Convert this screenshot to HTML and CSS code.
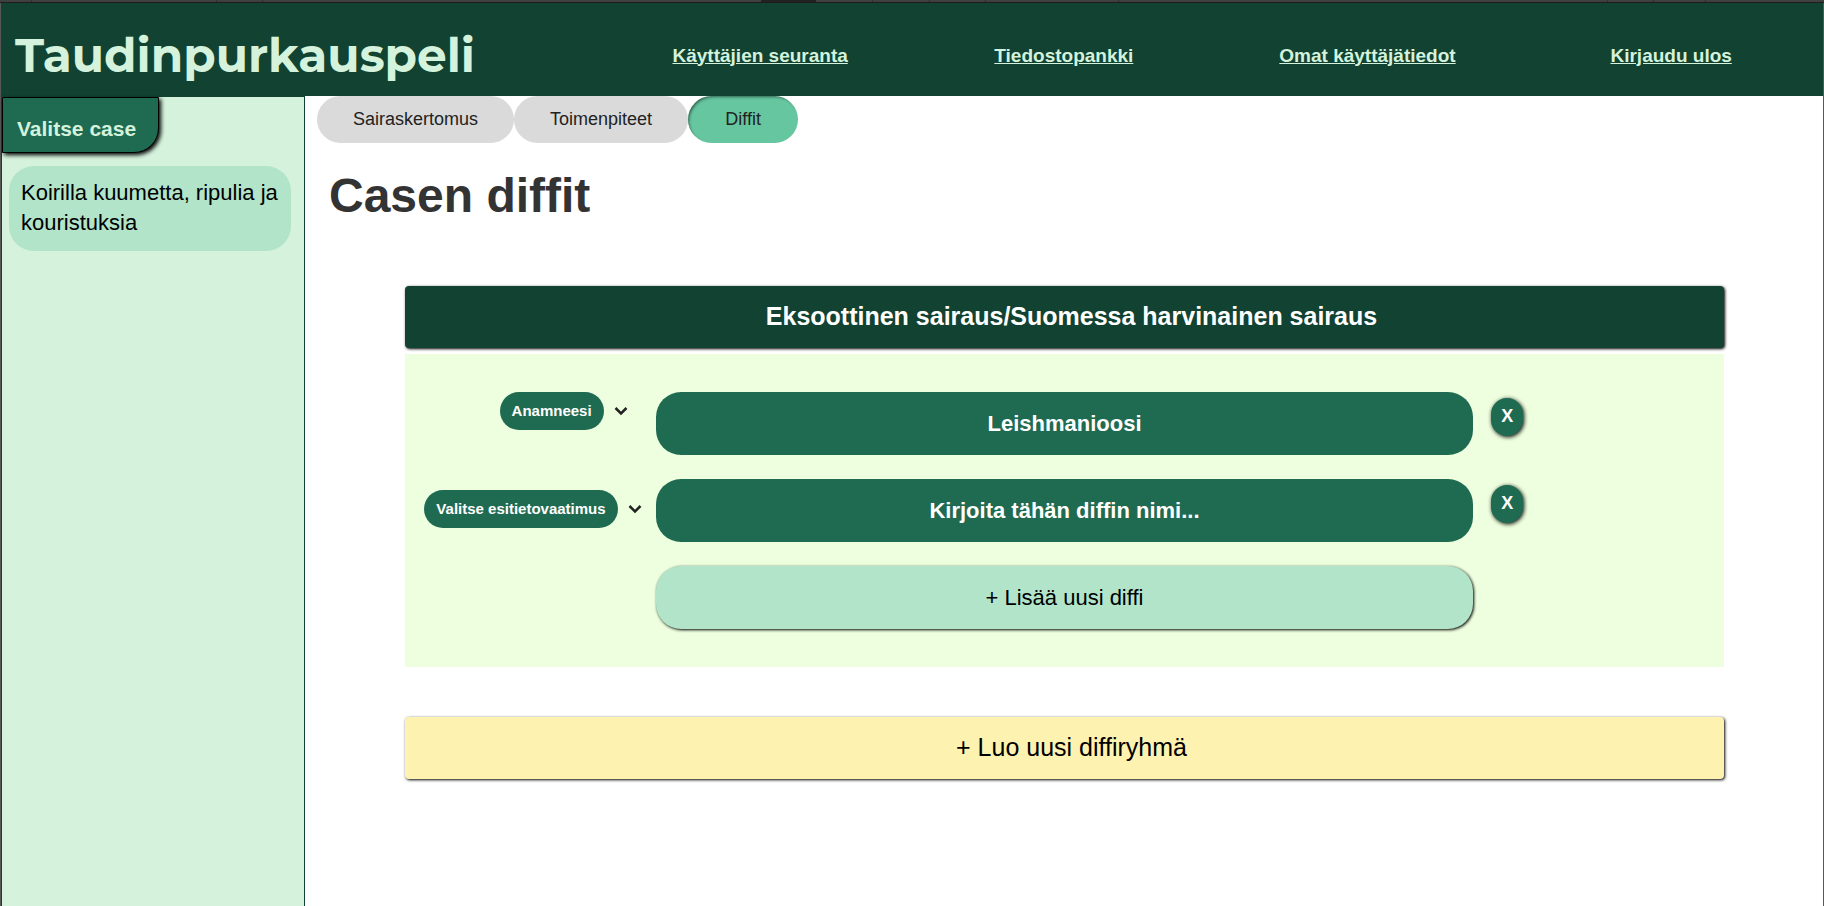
FILE: index.html
```html
<!DOCTYPE html>
<html lang="fi">
<head>
<meta charset="utf-8">
<title>Taudinpurkauspeli</title>
<link rel="stylesheet" href="styles.css">
</head>
<body>
<div class="strip"></div>
<div class="app">
  <header class="header">
    <div class="logo">Taudinpurkauspeli</div>
    <nav class="nav">
      <a href="#seuranta">Käyttäjien seuranta</a>
      <a href="#tiedostot">Tiedostopankki</a>
      <a href="#tiedot">Omat käyttäjätiedot</a>
      <a href="#ulos">Kirjaudu ulos</a>
    </nav>
  </header>
  <div class="body">
    <aside class="sidebar">
      <h2 class="sidebar-title">Valitse case</h2>
      <button class="case" type="button">Koirilla kuumetta, ripulia ja kouristuksia</button>
    </aside>
    <main class="main">
      <div class="tabs">
        <button class="tab" type="button">Sairaskertomus</button>
        <button class="tab" type="button">Toimenpiteet</button>
        <button class="tab tab-active" type="button">Diffit</button>
      </div>
      <h1 class="title">Casen diffit</h1>
      <section class="group">
        <h2 class="bar bar-dark">Eksoottinen sairaus/Suomessa harvinainen sairaus</h2>
        <div class="panel">
          <div class="row">
            <div class="premise premise-set">
              <span class="tag">Anamneesi</span>
              <button class="toggle" type="button" aria-label="Avaa valikko"><svg class="chevron" viewBox="0 0 14 10"><path d="M1.500 2 7 7.500 12.500 2"/></svg></button>
            </div>
            <input class="pill" type="text" aria-label="Diffin nimi" value="Leishmanioosi">
            <button class="remove" type="button">X</button>
          </div>
          <div class="row">
            <div class="premise premise-empty">
              <span class="tag">Valitse esitietovaatimus</span>
              <button class="toggle" type="button" aria-label="Avaa valikko"><svg class="chevron" viewBox="0 0 14 10"><path d="M1.500 2 7 7.500 12.500 2"/></svg></button>
            </div>
            <input class="pill" type="text" aria-label="Diffin nimi" placeholder="Kirjoita tähän diffin nimi...">
            <button class="remove" type="button">X</button>
          </div>
          <div class="row">
            <button class="pill pill-add" type="button">+ Lisää uusi diffi</button>
          </div>
        </div>
      </section>
      <button class="bar bar-new" type="button">+ Luo uusi diffiryhmä</button>
    </main>
  </div>
</div>
</body>
</html>
```
FILE: styles.css
```css
* { box-sizing: border-box; }

body {
  margin: 0;
  min-height: 100vh;
  display: flex;
  flex-direction: column;
  font-family: "Liberation Sans", Arial, sans-serif;
  color: #000;
  background: #fff;
}

button, input {
  margin: 0;
  padding: 0;
  border: 0;
  font-family: inherit;
  color: inherit;
}

.strip {
  height: 3px;
  border-bottom: 1px solid #1c1c1c;
  background:
    linear-gradient(#222, #222) 761px 0 / 55px 2px no-repeat,
    linear-gradient(#303030, #303030) 31px 0 / 1px 2px no-repeat,
    linear-gradient(#303030, #303030) 216px 0 / 1px 2px no-repeat,
    linear-gradient(#303030, #303030) 262px 0 / 1px 2px no-repeat,
    linear-gradient(#303030, #303030) 872px 0 / 1px 2px no-repeat,
    linear-gradient(#303030, #303030) 929px 0 / 1px 2px no-repeat,
    linear-gradient(#303030, #303030) 985px 0 / 1px 2px no-repeat,
    linear-gradient(#303030, #303030) 1118px 0 / 1px 2px no-repeat,
    linear-gradient(#303030, #303030) 1607px 0 / 1px 2px no-repeat,
    linear-gradient(#303030, #303030) 1653px 0 / 1px 2px no-repeat,
    linear-gradient(#303030, #303030) 1705px 0 / 1px 2px no-repeat,
    #404040;
}

.app {
  flex: 1;
  display: flex;
  flex-direction: column;
  border: solid #585858;
  border-width: 0 1px;
}

.header {
  display: grid;
  grid-template-columns: 1fr 2fr;
  align-items: center;
  height: 93px;
  color: #d4f2dc;
  background: #114232;
}

.logo {
  padding: 12px 0 0 14px;
  font: bold 47px/60px Montserrat, Inter, sans-serif;
}

.nav {
  display: grid;
  grid-template-columns: repeat(4, 1fr);
  padding-top: 12px;
  text-align: center;
}

.nav a {
  font-size: 19px;
  line-height: 22px;
  font-weight: bold;
  color: inherit;
}

.body {
  flex: 1;
  display: grid;
  grid-template-columns: 304px 1fr;
}

.sidebar {
  border: 1px solid #114232;
  border-bottom: 0;
  background: #d4f2dc;
}

.sidebar-title {
  width: fit-content;
  margin: 0;
  padding: 19px 22px 11px 14px;
  border: 1px solid #000;
  border-bottom-right-radius: 25px;
  font-size: 21px;
  line-height: 24px;
  color: #d4f2dc;
  background: #1f6b52;
  box-shadow: 2px 2px 4px #000;
}

.case {
  display: block;
  width: calc(100% - 20px);
  margin: 13px 13px 0 7px;
  padding: 12px 4px 13px 12px;
  border-radius: 25px;
  font-size: 22px;
  line-height: 30px;
  text-align: left;
  background: #b1e4c9;
}

.main { padding-bottom: 40px; }

.tabs {
  display: flex;
  padding-left: 12px;
}

.tab {
  min-width: 110px;
  padding: 0 36px;
  border-radius: 24px;
  font-size: 18px;
  line-height: 47px;
  color: #222;
  background: #dadada;
}

.tab-active {
  background: #66c6a0;
  box-shadow: inset 2px 2px 3px -1px rgba(0, 0, 0, 0.5);
}

.title {
  margin: 25px 24px 63px;
  font-size: 48px;
  line-height: 55px;
  color: #333;
}

.group { margin: 0 99px 50px 100px; }

.bar {
  display: block;
  margin: 0;
  padding: 0 0 2px 14px;
  border-radius: 4px;
  font-size: 25px;
  line-height: 60px;
  text-align: center;
  box-shadow: 1px 1px 3px #000;
}

.bar-dark {
  color: #fff;
  background: #114232;
}

.bar-new {
  width: calc(100% - 199px);
  margin: 0 99px 0 100px;
  background: #fef2b0;
}

.panel {
  display: grid;
  gap: 24px;
  margin-top: 6px;
  padding: 38px 0;
  background: #edffde;
}

.row {
  display: grid;
  grid-template-columns: 19fr 62fr 19fr;
}

.pill {
  grid-column: 2;
  min-width: 0;
  height: 63px;
  padding-top: 1px;
  border-radius: 25px;
  font-size: 22px;
  font-weight: bold;
  text-align: center;
  color: #fff;
  background: #1f6b52;
}

.pill::placeholder {
  color: #fff;
  opacity: 1;
}

.pill-add {
  font-weight: normal;
  color: #000;
  background: #b1e4c9;
  box-shadow: 1px 1px 3px #000;
}

.premise {
  display: flex;
  align-items: center;
  justify-content: flex-end;
  gap: 10px;
  height: 38px;
}

.premise-set { padding-right: 28px; }

.premise-empty {
  margin-top: 11px;
  padding-right: 14px;
}

.tag {
  padding: 0 12px;
  border-radius: 19px;
  font-size: 15px;
  line-height: 38px;
  font-weight: bold;
  white-space: nowrap;
  color: #fff;
  background: #1f6b52;
}

.toggle {
  display: flex;
  background: none;
}

.chevron {
  width: 14px;
  height: 10px;
  fill: none;
  stroke: #222;
  stroke-width: 2.5;
}

.remove {
  width: 32px;
  height: 38px;
  margin: 6px 0 0 18px;
  padding-bottom: 2px;
  border-radius: 16px;
  font-size: 18px;
  font-weight: bold;
  color: #fff;
  background: #1f6b52;
  box-shadow: 1px 1px 4px #000;
}
```
